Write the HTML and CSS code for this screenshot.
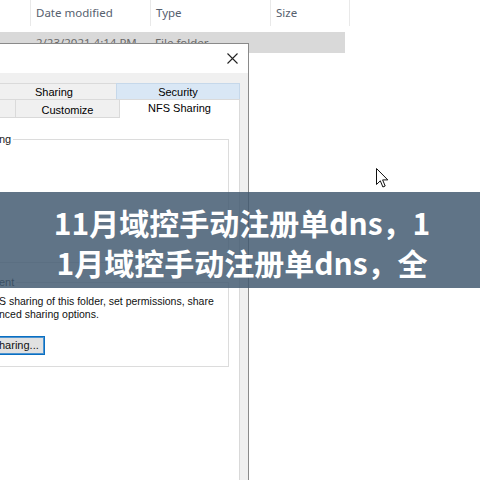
FILE: index.html
```html
<!DOCTYPE html>
<html>
<head>
<meta charset="utf-8">
<link rel="stylesheet" href="styles.css">
</head>
<body>
<div class="screen">
  <div class="explorer">
    <div class="explorer-head">
      <div class="col col-name"></div>
      <div class="col col-date">Date modified</div>
      <div class="col col-type">Type</div>
      <div class="col col-size">Size</div>
    </div>
    <div class="explorer-row">
      <div class="cell cell-date">2/23/2021 4:14 PM</div>
      <div class="cell cell-type">File folder</div>
    </div>
  </div>

  <div class="dialog">
    <div class="titlebar">
      <svg class="close" width="11" height="11" viewBox="0 0 11 11"><path d="M0.5 0.5 L10.5 10.5 M10.5 0.5 L0.5 10.5" stroke="#222" stroke-width="1.1" fill="none"/></svg>
    </div>
    <div class="dialog-body">
      <div class="tabrow tabrow-1">
        <div class="tab tab-sharing">Sharing</div>
        <div class="tab tab-security">Security</div>
      </div>
      <div class="tabrow tabrow-2">
        <div class="tab tab-small"></div>
        <div class="tab tab-customize">Customize</div>
        <div class="tab tab-nfs">NFS Sharing</div>
      </div>
      <div class="panel">
        <div class="group group-1">
          <span class="group-title">ng</span>
        </div>
        <div class="group group-2">
          <span class="group-title">ent</span>
          <p class="group-text">S sharing of this folder, set permissions, share<br>nced sharing options.</p>
          <div class="btn">haring...</div>
        </div>
      </div>
    </div>
  </div>

  <div class="banner">
    <span class="banner-line">11月域控手动注册单dns，1</span>
    <span class="banner-line">1月域控手动注册单dns，全</span>
  </div>

  <svg class="cursor" width="13" height="21" viewBox="0 0 13 21">
    <path d="M0.5 0.5 L0.5 16.5 L4.3 12.8 L6.9 19 L9.2 18 L6.6 11.9 L11.8 11.9 Z" fill="#fff" stroke="#111" stroke-width="1" stroke-linejoin="miter"/>
  </svg>
</div>
</body>
</html>
```

FILE: styles.css
```css
html, body {
  margin: 0;
  padding: 0;
  background: #ffffff;
}

body {
  width: 480px;
  height: 480px;
  overflow: hidden;
  font-family: "Liberation Sans", Arial, sans-serif;
}

.screen {
  position: relative;
  width: 480px;
  height: 480px;
  overflow: hidden;
  background: #ffffff;
}

/* explorer list behind the dialog */
.explorer-head {
  display: flex;
  height: 26px;
}

.col {
  box-sizing: border-box;
  height: 26px;
  border-right: 1px solid #e9e9e9;
  padding-left: 5px;
  font-family: "Noto Sans", "Open Sans", sans-serif;
  font-size: 11.5px;
  line-height: 26px;
  color: #56606e;
}

.col-name { width: 31px; padding-left: 0; }
.col-date { width: 120px; }
.col-type { width: 120px; }
.col-size { width: 79px; }

.explorer-row {
  display: flex;
  margin-top: 6px;
  width: 345px;
  height: 21px;
  background: #d9d9d9;
  font-family: "Noto Sans", "Open Sans", sans-serif;
  font-size: 11.5px;
  line-height: 21px;
  color: #6a6a6a;
}

.cell { box-sizing: border-box; }
.cell-date { width: 151px; padding-left: 36px; }
.cell-type { width: 120px; padding-left: 4px; }

/* properties dialog */
.dialog {
  position: absolute;
  top: 43px;
  left: -10px;
  width: 259px;
  height: 460px;
  box-sizing: border-box;
  border: 1px solid #8a8a8a;
  background: #f0f0f0;
  display: flex;
  flex-direction: column;
}

.titlebar {
  height: 29px;
  background: #ffffff;
  display: flex;
  justify-content: flex-end;
  align-items: center;
  padding-right: 10px;
}

.close { display: block; }

.dialog-body {
  flex: 1;
  padding: 10px 8px 0 0;
  display: flex;
  flex-direction: column;
  font-size: 11px;
  color: #000;
}

.tabrow {
  display: flex;
}

.tabrow-1 { height: 16px; }
.tabrow-2 { height: 18px; position: relative; z-index: 1; }

.tab {
  box-sizing: border-box;
  border: 1px solid #dadada;
  border-bottom: none;
  background: #f0f0f0;
  text-align: center;
  white-space: nowrap;
  overflow: hidden;
}

.tabrow-1 .tab { line-height: 15px; padding-top: 1px; }

.tab-sharing { width: 125px; border-right: none; }
.tab-security {
  width: 124px;
  background: #d9e7f5;
  border-color: #c6d8ea;
}

.tabrow-2 .tab { line-height: 18px; padding-top: 1px; }
.tab-small { width: 24px; border-right: none; }
.tab-customize { width: 105px; }
.tab-nfs {
  width: 120px;
  background: #ffffff;
  margin-bottom: -1px;
  height: 19px;
  border-left: none;
  line-height: 16px !important;
  padding-top: 0 !important;
}

.panel {
  flex: 1;
  background: #ffffff;
  border: 1px solid #d9d9d9;
  border-left: none;
  padding-top: 21px;
  display: flex;
  flex-direction: column;
}

.group {
  box-sizing: border-box;
  border: 1px solid #dcdcdc;
  margin-right: 10px;
  padding-left: 7px;
  display: flex;
  flex-direction: column;
  align-items: flex-start;
}

.group-1 { height: 124px; }
.group-2 { margin-top: 19px; padding-bottom: 11px; }

.group-title {
  margin-top: -7px;
  margin-left: -7px;
  padding-left: 7px;
  padding-right: 2px;
  background: #ffffff;
  line-height: 13px;
  color: #1a1a1a;
}

.group-text {
  margin: 6px 0 0 0;
  font-size: 10.5px;
  line-height: 13px;
  color: #111;
}

.btn {
  margin-top: 15px;
  margin-left: -17px;
  box-sizing: border-box;
  width: 63px;
  height: 19px;
  padding-left: 16px;
  line-height: 16px;
  background: #e1e1e1;
  border: 1px solid #0a6fc2;
  box-shadow: inset 0 0 0 1px #4d94d0;
  color: #111;
  white-space: nowrap;
}

/* title overlay */
.banner {
  position: absolute;
  top: 192px;
  left: 0;
  width: 480px;
  height: 96px;
  box-sizing: border-box;
  padding-top: 10px;
  background: rgba(66, 89, 112, 0.84);
  text-align: center;
  font-family: "Noto Sans CJK SC", "Noto Sans", sans-serif;
  font-weight: 700;
  font-size: 30px;
  line-height: 40px;
  color: #ffffff;
}

.banner-line {
  display: block;
  white-space: nowrap;
  padding-left: 4px;
}

.cursor {
  position: absolute;
  left: 376px;
  top: 168px;
}
```
